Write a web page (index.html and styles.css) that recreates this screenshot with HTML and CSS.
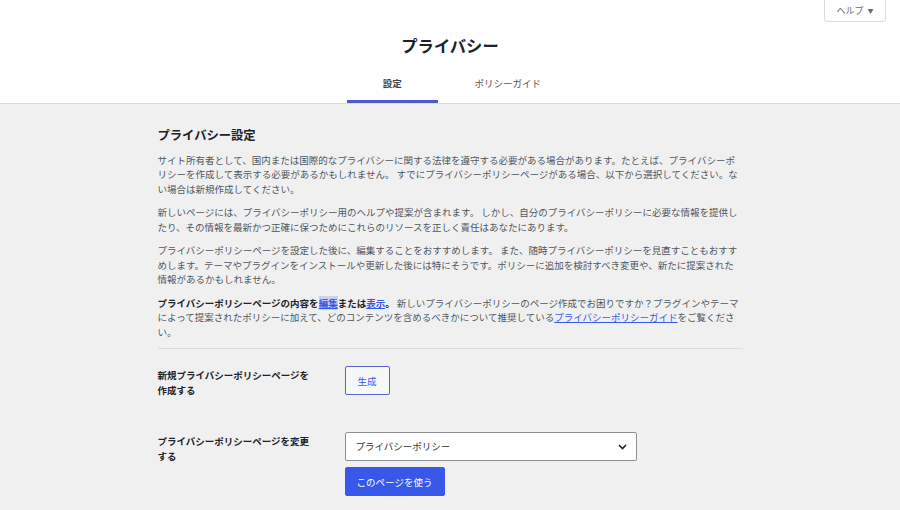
FILE: index.html
```html
<!DOCTYPE html>
<html lang="ja">
<head>
    <meta charset="utf-8">
    <title>プライバシー</title>
    <link rel="stylesheet" href="styles.css">
</head>
<body>
    <div class="help-tab">ヘルプ <span class="help-arrow">▼</span></div>

    <div class="privacy-header">
        <h1>プライバシー</h1>
        <nav class="tabs">
            <a class="tab active" href="#">設定</a>
            <a class="tab" href="#">ポリシーガイド</a>
        </nav>
    </div>

    <div class="privacy-body">
        <h2>プライバシー設定</h2>
        <p>サイト所有者として、国内または国際的なプライバシーに関する法律を遵守する必要がある場合があります。たとえば、プライバシーポリシーを作成して表示する必要があるかもしれません。 すでにプライバシーポリシーページがある場合、以下から選択してください。ない場合は新規作成してください。</p>
        <p>新しいページには、プライバシーポリシー用のヘルプや提案が含まれます。 しかし、自分のプライバシーポリシーに必要な情報を提供したり、その情報を最新かつ正確に保つためにこれらのリソースを正しく責任はあなたにあります。</p>
        <p>プライバシーポリシーページを設定した後に、編集することをおすすめします。 また、随時プライバシーポリシーを見直すこともおすすめします。テーマやプラグインをインストールや更新した後には特にそうです。ポリシーに追加を検討すべき変更や、新たに提案された情報があるかもしれません。</p>
        <p><strong>プライバシーポリシーページの内容を<a class="focused" href="#">編集</a>または<a href="#">表示</a>。</strong> 新しいプライバシーポリシーのページ作成でお困りですか？プラグインやテーマによって提案されたポリシーに加えて、どのコンテンツを含めるべきかについて推奨している<a href="#">プライバシーポリシーガイド</a>をご覧ください。</p>

        <hr>

        <div class="setting-row first">
            <div class="setting-label">新規プライバシーポリシーページを作成する</div>
            <div class="setting-control">
                <button class="button">生成</button>
            </div>
        </div>

        <div class="setting-row">
            <div class="setting-label">プライバシーポリシーページを変更する</div>
            <div class="setting-control">
                <div class="select">
                    <span>プライバシーポリシー</span>
                    <svg width="9" height="6" viewBox="0 0 9 6"><path d="M1 1l3.5 3.5L8 1" fill="none" stroke="#1d2327" stroke-width="1.6"/></svg>
                </div>
                <button class="button primary">このページを使う</button>
            </div>
        </div>
    </div>
</body>
</html>
```

FILE: styles.css
```css
body {
    margin: 0;
    background: #f0f0f1;
    color: #50575e;
    font-family: "Noto Sans CJK JP", "Noto Sans", sans-serif;
    font-size: 9.5px;
    line-height: 14.5px;
}

.help-tab {
    position: absolute;
    top: 0;
    right: 14px;
    width: 62px;
    height: 22px;
    box-sizing: border-box;
    background: #fff;
    border: 1px solid #dcdcde;
    border-top: none;
    border-radius: 0 0 4px 4px;
    color: #646970;
    font-size: 9px;
    line-height: 21px;
    text-align: center;
}
.help-arrow {
    font-size: 6px;
    margin-left: 2px;
    vertical-align: 1px;
}

.privacy-header {
    background: #fff;
    border-bottom: 1px solid #dcdcde;
    text-align: center;
}
.privacy-header h1 {
    margin: 0;
    padding-top: 34px;
    color: #1d2327;
    font-size: 16.3px;
    line-height: 22px;
    font-weight: 700;
}
.tabs {
    display: inline-grid;
    grid-template-columns: 1fr 1fr;
    margin-top: 14px;
}
.tab {
    display: block;
    padding: 6px 12px 12px;
    margin: 0 12.5px;
    color: #50575e;
    text-decoration: none;
}
.tab.active {
    font-weight: 600;
    color: #3c434a;
    box-shadow: inset 0 -3px #4f5ac8;
}

.privacy-body {
    max-width: 585px;
    margin: 0 auto;
}
.privacy-body h2 {
    margin: 23px 0 9px;
    color: #1d2327;
    font-size: 12.3px;
    line-height: 17px;
    font-weight: 700;
}
.privacy-body p {
    margin: 0 0 9px;
}
.privacy-body strong {
    color: #1d2327;
}
.privacy-body a {
    color: #3858e9;
}
.privacy-body a.focused {
    background: #c8d2f7;
}
hr {
    margin: 9px 0 0;
    border: none;
    border-top: 1px solid #dcdcde;
}

.setting-row {
    display: grid;
    grid-template-columns: 155px 1fr;
    column-gap: 32px;
    margin-top: 35px;
}
.setting-row.first {
    margin-top: 17px;
}
.setting-label {
    padding-top: 2px;
    color: #1d2327;
    font-weight: 700;
}
.setting-control {
    display: flex;
    flex-direction: column;
    align-items: flex-start;
    gap: 6px;
}

.button {
    height: 29px;
    padding: 0 12px;
    background: #f6f7f7;
    border: 1px solid #5a63d0;
    border-radius: 2px;
    color: #3858e9;
    font-family: inherit;
    font-size: 9.5px;
}
.button.primary {
    width: 100px;
    padding: 0;
    background: #3858e9;
    border-color: #3858e9;
    color: #fff;
}

.select {
    width: 292px;
    height: 29px;
    box-sizing: border-box;
    display: flex;
    align-items: center;
    justify-content: space-between;
    padding: 0 9px 0 10px;
    background: #fff;
    border: 1px solid #8c8f94;
    border-radius: 2px;
    color: #2c3338;
}
```
